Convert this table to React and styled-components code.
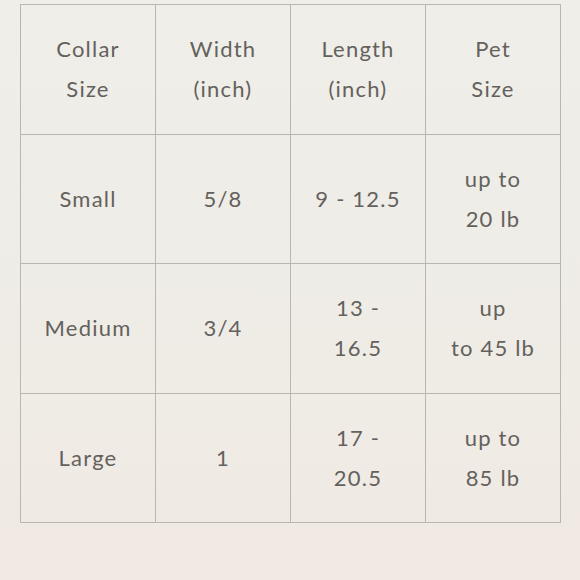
import React from 'react';
import styled, { createGlobalStyle } from 'styled-components';

const GlobalStyle = createGlobalStyle`
  html, body {
    margin: 0;
    padding: 0;
  }
  body {
    width: 580px;
    height: 580px;
    background: linear-gradient(180deg, #efeee8 0%, #efece6 60%, #f1e9e3 100%);
    font-family: 'Lato', 'Liberation Sans', sans-serif;
  }
`;

const Page = styled.div`
  padding: 4px 20px 0 20px;
`;

const Table = styled.table`
  border-collapse: collapse;
  width: 540px;
  table-layout: fixed;
`;

const Cell = styled.td`
  width: 135px;
  height: 129.5px;
  padding: 0 8px;
  box-sizing: border-box;
  border: 1.5px solid #b9b6b0;
  text-align: center;
  vertical-align: middle;
  color: #64615d;
  font-size: 22px;
  line-height: 40px;
  letter-spacing: 1.2px;
`;

const rows = [
  [['Collar', 'Size'], ['Width', '(inch)'], ['Length', '(inch)'], ['Pet', 'Size']],
  [['Small'], ['5/8'], ['9 - 12.5'], ['up to', '20 lb']],
  [['Medium'], ['3/4'], ['13 -', '16.5'], ['up', 'to 45 lb']],
  [['Large'], ['1'], ['17 -', '20.5'], ['up to', '85 lb']],
];

export default function App() {
  return (
    <Page>
      <GlobalStyle />
      <Table>
        <tbody>
          {rows.map((row, i) => (
            <tr key={i}>
              {row.map((lines, j) => (
                <Cell key={j}>
                  {lines.map((l, k) => (
                    <React.Fragment key={k}>
                      {k > 0 && <br />}
                      {l}
                    </React.Fragment>
                  ))}
                </Cell>
              ))}
            </tr>
          ))}
        </tbody>
      </Table>
    </Page>
  );
}
